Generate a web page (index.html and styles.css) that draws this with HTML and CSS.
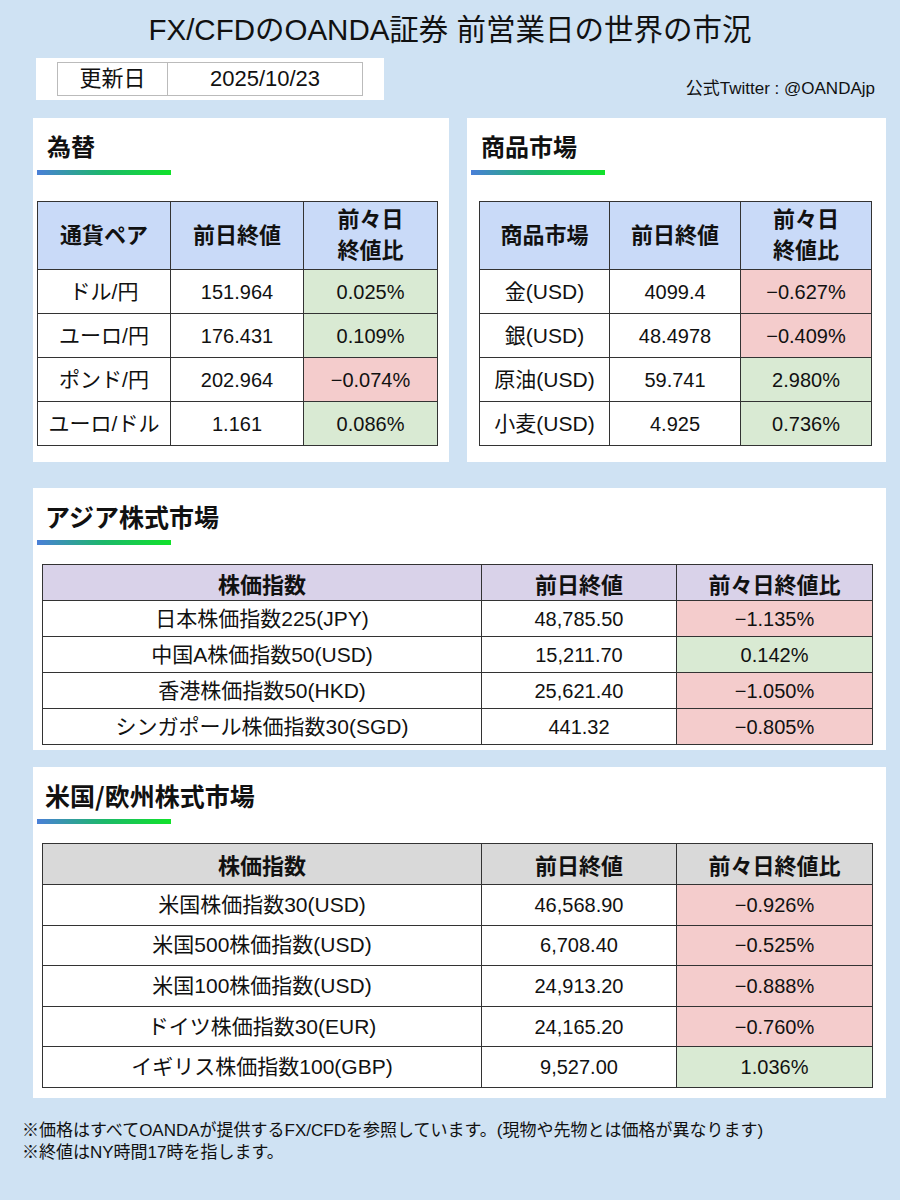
FILE: index.html
```html
<!DOCTYPE html>
<html lang="ja">
<head>
<meta charset="utf-8">
<link rel="stylesheet" href="styles.css">
</head>
<body>
<div class="page">
  <h1 class="title">FX/CFDのOANDA証券 前営業日の世界の市況</h1>
  <div class="meta">
    <div class="update-box">
      <table class="update">
        <tr><td class="u-label">更新日</td><td class="u-date">2025/10/23</td></tr>
      </table>
    </div>
    <div class="twitter">公式Twitter : @OANDAjp</div>
  </div>

  <div class="row2">
    <section class="panel">
      <h2 class="ptitle">為替</h2>
      <div class="bar"></div>
      <table class="tbl tbl-small">
        <tr class="head blue"><th>通貨ペア</th><th>前日終値</th><th>前々日<br>終値比</th></tr>
        <tr><td>ドル/円</td><td>151.964</td><td class="up">0.025%</td></tr>
        <tr><td>ユーロ/円</td><td>176.431</td><td class="up">0.109%</td></tr>
        <tr><td>ポンド/円</td><td>202.964</td><td class="down">−0.074%</td></tr>
        <tr><td>ユーロ/ドル</td><td>1.161</td><td class="up">0.086%</td></tr>
      </table>
    </section>
    <section class="panel panel-r">
      <h2 class="ptitle">商品市場</h2>
      <div class="bar"></div>
      <table class="tbl tbl-small tbl-com">
        <tr class="head blue"><th>商品市場</th><th>前日終値</th><th>前々日<br>終値比</th></tr>
        <tr><td>金(USD)</td><td>4099.4</td><td class="down">−0.627%</td></tr>
        <tr><td>銀(USD)</td><td>48.4978</td><td class="down">−0.409%</td></tr>
        <tr><td>原油(USD)</td><td>59.741</td><td class="up">2.980%</td></tr>
        <tr><td>小麦(USD)</td><td>4.925</td><td class="up">0.736%</td></tr>
      </table>
    </section>
  </div>

  <section class="panel wide asia">
    <h2 class="ptitle wtitle">アジア株式市場</h2>
    <div class="bar"></div>
    <table class="tbl tbl-wide tbl-asia">
      <tr class="head lav"><th>株価指数</th><th>前日終値</th><th>前々日終値比</th></tr>
      <tr><td>日本株価指数225(JPY)</td><td>48,785.50</td><td class="down">−1.135%</td></tr>
      <tr><td>中国A株価指数50(USD)</td><td>15,211.70</td><td class="up">0.142%</td></tr>
      <tr><td>香港株価指数50(HKD)</td><td>25,621.40</td><td class="down">−1.050%</td></tr>
      <tr><td>シンガポール株価指数30(SGD)</td><td>441.32</td><td class="down">−0.805%</td></tr>
    </table>
  </section>

  <section class="panel wide useu">
    <h2 class="ptitle wtitle">米国/欧州株式市場</h2>
    <div class="bar"></div>
    <table class="tbl tbl-wide tbl-us">
      <tr class="head gray"><th>株価指数</th><th>前日終値</th><th>前々日終値比</th></tr>
      <tr><td>米国株価指数30(USD)</td><td>46,568.90</td><td class="down">−0.926%</td></tr>
      <tr><td>米国500株価指数(USD)</td><td>6,708.40</td><td class="down">−0.525%</td></tr>
      <tr><td>米国100株価指数(USD)</td><td>24,913.20</td><td class="down">−0.888%</td></tr>
      <tr><td>ドイツ株価指数30(EUR)</td><td>24,165.20</td><td class="down">−0.760%</td></tr>
      <tr><td>イギリス株価指数100(GBP)</td><td>9,527.00</td><td class="up">1.036%</td></tr>
    </table>
  </section>

  <div class="notes">
    <p>※価格はすべてOANDAが提供するFX/CFDを参照しています。(現物や先物とは価格が異なります)</p>
    <p>※終値はNY時間17時を指します。</p>
  </div>
</div>
</body>
</html>
```

FILE: styles.css
```css
* { box-sizing: border-box; }
html, body {
  margin: 0;
  padding: 0;
}
body {
  background: #cfe2f3;
  width: 900px;
  height: 1200px;
  overflow: hidden;
  font-family: "Liberation Sans", "Noto Sans CJK JP", sans-serif;
  color: #111;
}
.page {
  display: flex;
  flex-direction: column;
  padding: 0 14px 0 33px;
}
.title {
  margin: 12px 0 0 -33px;
  width: 900px;
  text-align: center;
  font-weight: normal;
  font-size: 29.5px;
  line-height: 36px;
  height: 38px;
}
.meta {
  display: flex;
  justify-content: space-between;
  align-items: flex-end;
  margin-top: 8px;
}
.update-box {
  background: #fff;
  width: 348px;
  height: 42px;
  margin-left: 3px;
  padding: 4px 0 0 21px;
}
.update {
  border-collapse: collapse;
  height: 34px;
}
.update td {
  border: 1px solid #bbb;
  font-size: 22px;
  line-height: 26px;
  text-align: center;
  padding: 0;
}
.u-label { width: 110px; }
.u-date { width: 195px; }
.twitter {
  font-size: 17px;
  line-height: 22px;
  margin-right: 11px;
  margin-bottom: 0;
}
.row2 {
  display: flex;
  gap: 18px;
  margin-top: 18px;
}
.panel {
  background: #fff;
}
.row2 .panel {
  width: 416px;
  height: 344px;
  padding: 12px 0 0 4px;
}
.row2 .panel-r {
  width: 419px;
}
.ptitle {
  margin: 0 0 0 10px;
  font-family: "Noto Sans CJK JP", sans-serif;
  font-size: 24px;
  line-height: 32px;
  font-weight: bold;
}
.bar {
  width: 134px;
  height: 5px;
  margin-top: 8px;
  background: linear-gradient(to right, #4a7fd8, #1cb86a 50%, #11e22a);
}
.tbl {
  border-collapse: collapse;
  text-align: center;
}
.tbl td, .tbl th {
  border: 1px solid #333;
  padding: 0;
  line-height: 26px;
}
.tbl-small {
  margin-top: 26px;
  width: 401px;
  font-family: "Noto Sans CJK JP", sans-serif;
}
.tbl-com { margin-left: 8px; width: 393px; }
.tbl-small th {
  height: 68px;
  font-size: 22px;
  line-height: 31px;
  font-weight: bold;
  padding-bottom: 5px;
}
.tbl-small td {
  height: 44px;
  font-size: 20px;
  font-family: "Liberation Sans", "Noto Sans CJK JP", sans-serif;
}
.tbl-small td:first-child { font-size: 21px; }
.tbl-small th:nth-child(1), .tbl-small td:nth-child(1) { width: 133px; }
.tbl-small th:nth-child(2), .tbl-small td:nth-child(2) { width: 133px; }
.tbl-com th:nth-child(1), .tbl-com td:nth-child(1) { width: 130px; }
.tbl-com th:nth-child(2), .tbl-com td:nth-child(2) { width: 131px; }
.blue th { background: #c9daf8; }
.lav th { background: #d9d2e9; }
.gray th { background: #d9d9d9; }
.up { background: #d9ead3; }
.down { background: #f4cccc; }

.wide {
  width: 853px;
  padding: 12px 0 0 4px;
}
.asia { height: 262px; margin-top: 26px; }
.useu { height: 331px; margin-top: 17px; }
.wtitle {
  margin-left: 8px;
  font-size: 25px;
}
.tbl-wide {
  margin-left: 5px;
  width: 831px;
  font-family: "Noto Sans CJK JP", sans-serif;
}
.tbl-wide th {
  font-size: 22px;
  font-weight: bold;
}
.tbl-wide td {
  font-size: 20px;
  font-family: "Liberation Sans", "Noto Sans CJK JP", sans-serif;
}
.tbl-wide td:first-child { font-size: 21px; }
.tbl-wide th:nth-child(1), .tbl-wide td:nth-child(1) { width: 439px; }
.tbl-wide th:nth-child(2), .tbl-wide td:nth-child(2) { width: 195px; }
.tbl-asia { margin-top: 19px; }
.tbl-asia th { height: 36px; }
.tbl-asia td { height: 36px; }
.tbl-us { margin-top: 19px; }
.tbl-us th { height: 41px; }
.tbl-us td { height: 40.6px; }

.notes {
  margin: 22px 0 0 -11px;
  font-size: 17px;
  line-height: 22px;
}
.notes p { margin: 0; }
```
